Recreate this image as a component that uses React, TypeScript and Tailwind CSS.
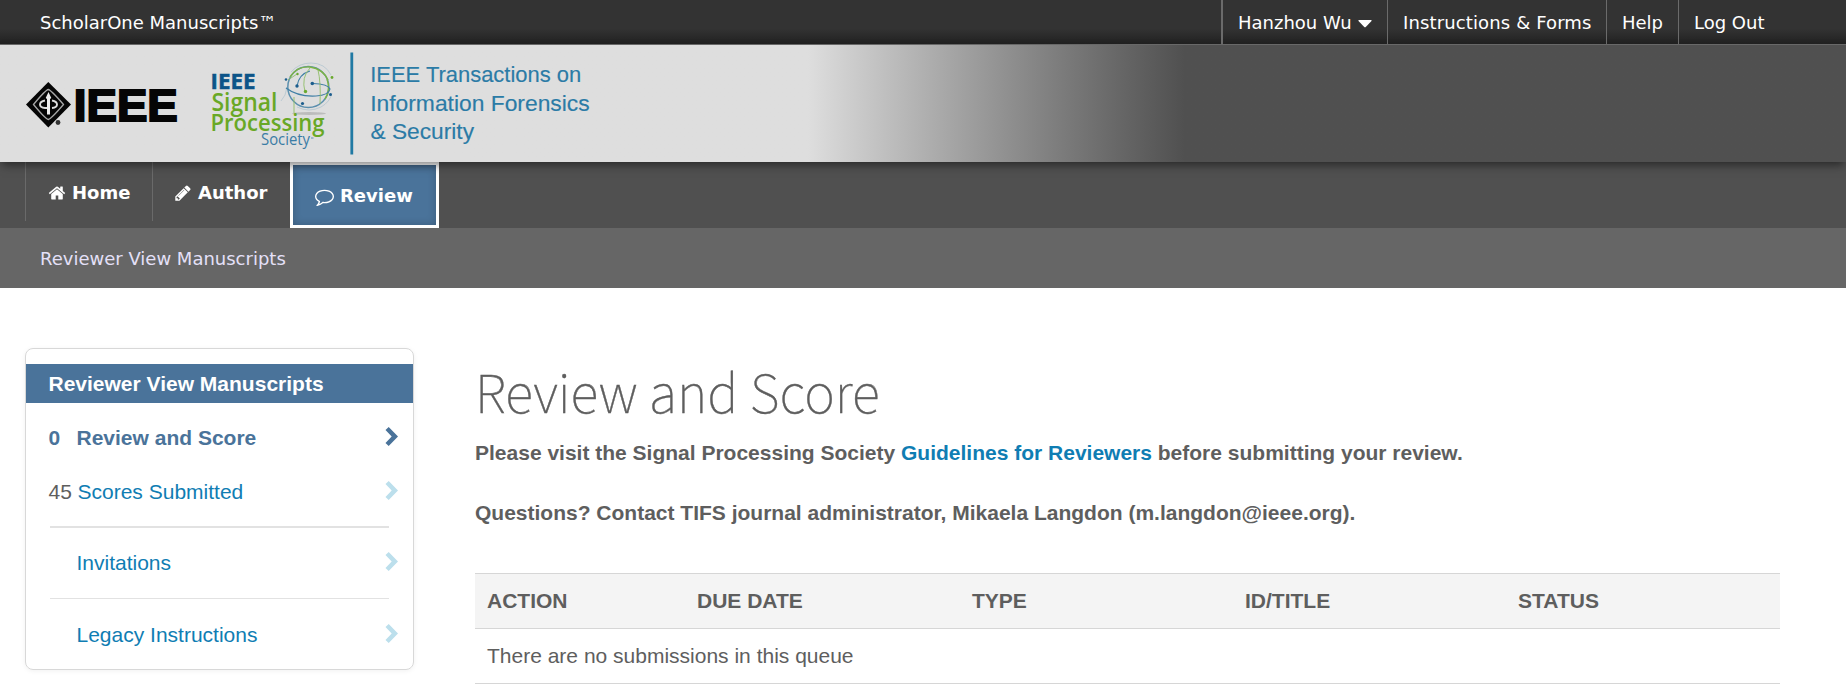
import type { ReactNode } from "react";

const HOME =
  "M1472 992v480q0 26-19 45t-45 19h-384v-384h-256v384h-384q-26 0-45-19t-19-45v-480q0-1 .5-3t.5-3l575-474 575 474q1 2 1 6zm223-69l-62 74q-8 9-21 11h-3q-13 0-21-7l-692-577-692 577q-12 8-24 7-13-2-21-11l-62-74q-8-10-7-23.5t11-21.5l719-599q32-26 76-26t76 26l244 204v-195q0-14 9-23t23-9h192q14 0 23 9t9 23v408l219 182q10 8 11 21.5t-7 23.5z";
const PENCIL =
  "M491 1536l91-91-235-235-91 91v107h128v128h107zm523-928q0-22-22-22-10 0-17 7l-542 542q-7 7-7 17 0 22 22 22 10 0 17-7l542-542q7-7 7-17zm-54-192l416 416-832 832h-416v-416zm683 96q0 53-37 90l-166 166-416-416 166-165q36-38 90-38 53 0 91 38l235 234q37 39 37 91z";
const COMMENT =
  "M896 384q-204 0-381.5 69.5t-282 187.5-104.5 255q0 112 71.5 213.5t201.5 175.5l87 50-27 96q-24 91-70 172 152-63 275-171l43-38 57 6q69 8 130 8 204 0 381.5-69.5t282-187.5 104.5-255-104.5-255-282-187.5-381.5-69.5zm896 512q0 174-120 321.5t-326 233-450 85.5q-70 0-145-8-198 175-460 242-49 14-114 22h-5q-15 0-27-10.5t-16-27.5v-1q-3-4-.5-12t2-10 4.5-9.5l6-9 7-8.5 8-9q7-8 31-34.5t34.5-38 31-39.5 32.5-51 27-59 26-76q-157-89-247.5-220t-90.5-281q0-174 120-321.5t326-233 450-85.5 450 85.5 326 233 120 321.5z";
const CHEVRON = "M3.700 0L13 9.500 3.700 19 .5 15.900 6.700 9.500 .5 3.100z";

function Icon({ d, viewBox = "0 0 1792 1792", className }: { d: string; viewBox?: string; className: string }) {
  return (
    <svg viewBox={viewBox} className={className} fill="currentColor" aria-hidden="true">
      <path d={d} />
    </svg>
  );
}

function TopBar() {
  return (
    <div className="flex h-[45px] justify-between border-b border-[#6b6b6b] bg-linear-to-b from-[#333333] from-65% to-[#212121] pr-[68px] pl-10 text-[18px] text-white">
      <span className="pt-3 leading-[21px]">ScholarOne Manuscripts™</span>
      <nav className="flex leading-[21px] [&>a]:border-l [&>a]:border-[#6b6b6b] [&>a]:pt-3 [&>a]:whitespace-nowrap">
        <a className="flex w-[166px] border-l-2! pl-[15px]">
          Hanzhou Wu
          <svg viewBox="0 0 14 8" className="mt-[8px] ml-[6px] h-2 w-[14px]" fill="currentColor" aria-hidden="true">
            <path d="M1 0h12q1 .2.5 1L8 6.800q-1 1-2 0L.5 1Q0 .2 1 0z" />
          </svg>
        </a>
        <a className="w-[219px] pl-[15px] tracking-[0.13px]">Instructions &amp; Forms</a>
        <a className="w-[72px] pl-[15px]">Help</a>
        <a className="w-[100px] pl-[15px]">Log Out</a>
      </nav>
    </div>
  );
}

function Logos() {
  return (
    <svg width="640" height="117" viewBox="0 45 640 117" aria-label="IEEE Signal Processing Society">
      {/* IEEE diamond emblem */}
      <path d="M48.300 82 71 104.500 48.300 127.500 26 104.500z" fill="#050505" />
      <path d="M48.300 89.500Q51 90 63.500 104.500 51 119 48.300 119.500 45.500 119 33.500 104.500 45.500 90 48.300 89.500z" fill="none" stroke="#a5a5a5" strokeWidth="1.300" />
      <path d="M48.500 92l2.800 6-1.300 1v15.500h-3V99l-1.300-1z" fill="#eee" />
      <path d="M45 100.500q-5 1-5 4t5 3.500h2M52 100.500q5 1 5 4t-5 3.500" fill="none" stroke="#ddd" strokeWidth="1.900" />
      <circle cx="58" cy="122.500" r="2.400" fill="#333" />
      <text x="73.800" y="120.500" textLength="104" lengthAdjust="spacingAndGlyphs" fontFamily="Liberation Sans" fontWeight="700" fontSize="45" fill="#050505" stroke="#050505" strokeWidth="2">IEEE</text>

      {/* Network globe */}
      <ellipse cx="309" cy="113.500" rx="17" ry="1.500" fill="#999" opacity=".5" />
      <g fill="none">
        <path d="M291 72q8-9 20-9 14 0 20 12M281 101q5-5 6-14M297 107q12 6 24 0 9-5 11-14" stroke="#b3c5cf" strokeWidth=".8" />
        <circle cx="308.300" cy="87" r="20.500" stroke="#5b8fae" strokeWidth="1.500" />
        <path d="M290 77q7-11 20-10 13 2 18 13M325 99q6-9 2-20" stroke="#7cb443" strokeWidth="1.400" />
        <path d="M286 88q12 9 30 8 13-1 14-7-2-5-17-5.500M297 86q2-12 13-15" stroke="#3f7fa5" strokeWidth="1.200" />
        <path d="M305 92q-4-15 5-24M318 70q3 12 2 34M294 113V97M297 74l-9 6" stroke="#90bd68" strokeWidth=".9" />
      </g>
      <g fill="#1c5d8d">
        <circle cx="297" cy="86" r="1.700" /><circle cx="312.300" cy="83.500" r="1.800" /><circle cx="286" cy="79.500" r="1.300" />
        <circle cx="330.500" cy="94.500" r="1.500" /><circle cx="302.500" cy="103.500" r="1.600" />
      </g>
      <g fill="#6aa92f">
        <circle cx="305.500" cy="91.500" r="1.700" /><circle cx="332" cy="77.500" r="1.400" /><circle cx="297.500" cy="74" r="1.200" />
      </g>

      <text x="210.500" y="89.300" textLength="45" lengthAdjust="spacingAndGlyphs" fontFamily="Open Sans" fontWeight="700" fontSize="21.500" fill="#0c5488" stroke="#0c5488" strokeWidth=".5">IEEE</text>
      <g fontFamily="Open Sans" fontWeight="600" fill="#69a826">
        <text x="211.500" y="110.500" textLength="66" lengthAdjust="spacingAndGlyphs" fontSize="25">Signal</text>
        <text x="210.500" y="131" textLength="114" lengthAdjust="spacingAndGlyphs" fontSize="23.500">Processing</text>
      </g>
      <text x="261" y="145.300" textLength="49" lengthAdjust="spacingAndGlyphs" fontFamily="Open Sans" fontSize="15.500" fill="#3a7ca5">Society</text>
      <path d="M311 138h2.500" stroke="#3a7ca5" strokeWidth=".8" />

      <path d="M351.800 52.500v102" stroke="#2079a3" strokeWidth="2.800" />
      <g fontFamily="Liberation Sans" fontSize="22.500" fill="#2b7ba6" stroke="#2b7ba6" strokeWidth=".15">
        <text x="370.200" y="82.300" textLength="211" lengthAdjust="spacingAndGlyphs">IEEE Transactions on</text>
        <text x="370.200" y="110.800" textLength="219.500" lengthAdjust="spacingAndGlyphs">Information Forensics</text>
        <text x="370.500" y="139.300" textLength="103.500" lengthAdjust="spacingAndGlyphs">&amp; Security</text>
      </g>
    </svg>
  );
}

function MainNav() {
  return (
    <nav className="flex h-[66px] bg-[#505050] pl-[25px] text-[18px] leading-[21px] font-bold text-white">
      <a className="flex h-[59px] w-[127px] border-l border-[#6a6a6a] pt-5 pl-[22px]">
        <Icon d={HOME} className="mt-[1.500px] mr-[6px] size-[18px]" />
        Home
      </a>
      <a className="flex h-[59px] w-[138px] border-l border-[#6a6a6a] pt-5 pl-[21px]">
        <Icon d={PENCIL} className="mt-[1.500px] mr-[6px] size-[18px]" />
        Author
      </a>
      <a className="flex h-[66px] w-[149px] border-[3px] border-white bg-[#4a739a] pt-5 pl-[22px] shadow-[inset_0_0_8px_rgba(0,0,0,0.2)]">
        <Icon d={COMMENT} className="mt-[2px] mr-[6px] size-[19px]" />
        Review
      </a>
    </nav>
  );
}

function QueueRow({ count, children, active = false, className = "" }: { count?: string; children: ReactNode; active?: boolean; className?: string }) {
  return (
    <div className={`flex pr-[15px] pl-[22.500px] ${active ? "font-bold text-[#4a739a]" : "text-[#0f7db3]"} ${className}`}>
      <span className={active ? "w-7" : "w-[29px] text-[#5e5e5e]"}>{count}</span>
      <a className={count ? "grow" : "-ml-px grow"}>{children}</a>
      <Icon d={CHEVRON} viewBox="0 0 13 19" className={`mt-px h-[19px] w-[13px] ${active ? "" : "text-[#bcdfec]"}`} />
    </div>
  );
}

function Sidebar() {
  return (
    <aside className="h-[322px] w-[389px] shrink-0 rounded-lg border border-[#d8d8d8] pt-[15px] shadow-[0_1px_5px_rgba(0,0,0,0.06)]">
      <h2 className="mb-[23px] h-[39px] bg-[#4a739a] pt-2 pl-[22.500px] font-bold text-white">Reviewer View Manuscripts</h2>
      <QueueRow count="0" active>Review and Score</QueueRow>
      <QueueRow count="45" className="mt-[30px]">Scores Submitted</QueueRow>
      <hr className="mt-[22px] mr-6 ml-6 border-t-2 border-[#e2e2e2]" />
      <QueueRow className="mt-[23px]">Invitations</QueueRow>
      <hr className="mt-[23px] mr-6 ml-6 border-[#e2e2e2]" />
      <QueueRow className="mt-6">Legacy Instructions</QueueRow>
    </aside>
  );
}

function Queue() {
  return (
    <main className="w-[1305px] pt-3 text-[#5e5e5e]">
      <h1 className="font-['Noto_Sans_CJK_SC',sans-serif] text-[52.200px] leading-[60px] font-thin [-webkit-text-stroke:0.4px_#5e5e5e]">Review and Score</h1>
      <p className="mt-[21px] font-bold">
        Please visit the Signal Processing Society <a className="text-[#0f7db3]">Guidelines for Reviewers</a> before submitting your review.
      </p>
      <p className="mt-9 font-bold">Questions? Contact TIFS journal administrator, Mikaela Langdon (m.langdon@ieee.org).</p>
      <div className="mt-12 grid h-14 grid-cols-[210px_275px_273px_273px_1fr] border-y border-[#d6d6d6] bg-[#f4f4f4] px-3 pt-[15px] font-bold">
        <span>ACTION</span>
        <span>DUE DATE</span>
        <span>TYPE</span>
        <span>ID/TITLE</span>
        <span>STATUS</span>
      </div>
      <div className="h-[55px] border-b border-[#d6d6d6] px-3 pt-[15px]">There are no submissions in this queue</div>
    </main>
  );
}

export default function App() {
  return (
    <div className="min-h-[696px] w-[1846px] overflow-hidden bg-white font-['DejaVu_Sans',sans-serif]">
      <TopBar />
      <header className="relative z-10 h-[117px] bg-linear-to-r from-[#dedede] from-[808px] to-[#505050] to-[1185px] shadow-[0_5px_9px_-2px_rgba(0,0,0,0.5)]">
        <Logos />
      </header>
      <MainNav />
      <div className="h-[60px] bg-[#666666] pt-5 pl-10 text-[18px] leading-[21px] text-[#e4e0f8]">Reviewer View Manuscripts</div>
      <div className="flex gap-[61px] pt-[60px] pl-[25px] font-['Liberation_Sans',sans-serif] text-[21px] leading-6">
        <Sidebar />
        <Queue />
      </div>
    </div>
  );
}
